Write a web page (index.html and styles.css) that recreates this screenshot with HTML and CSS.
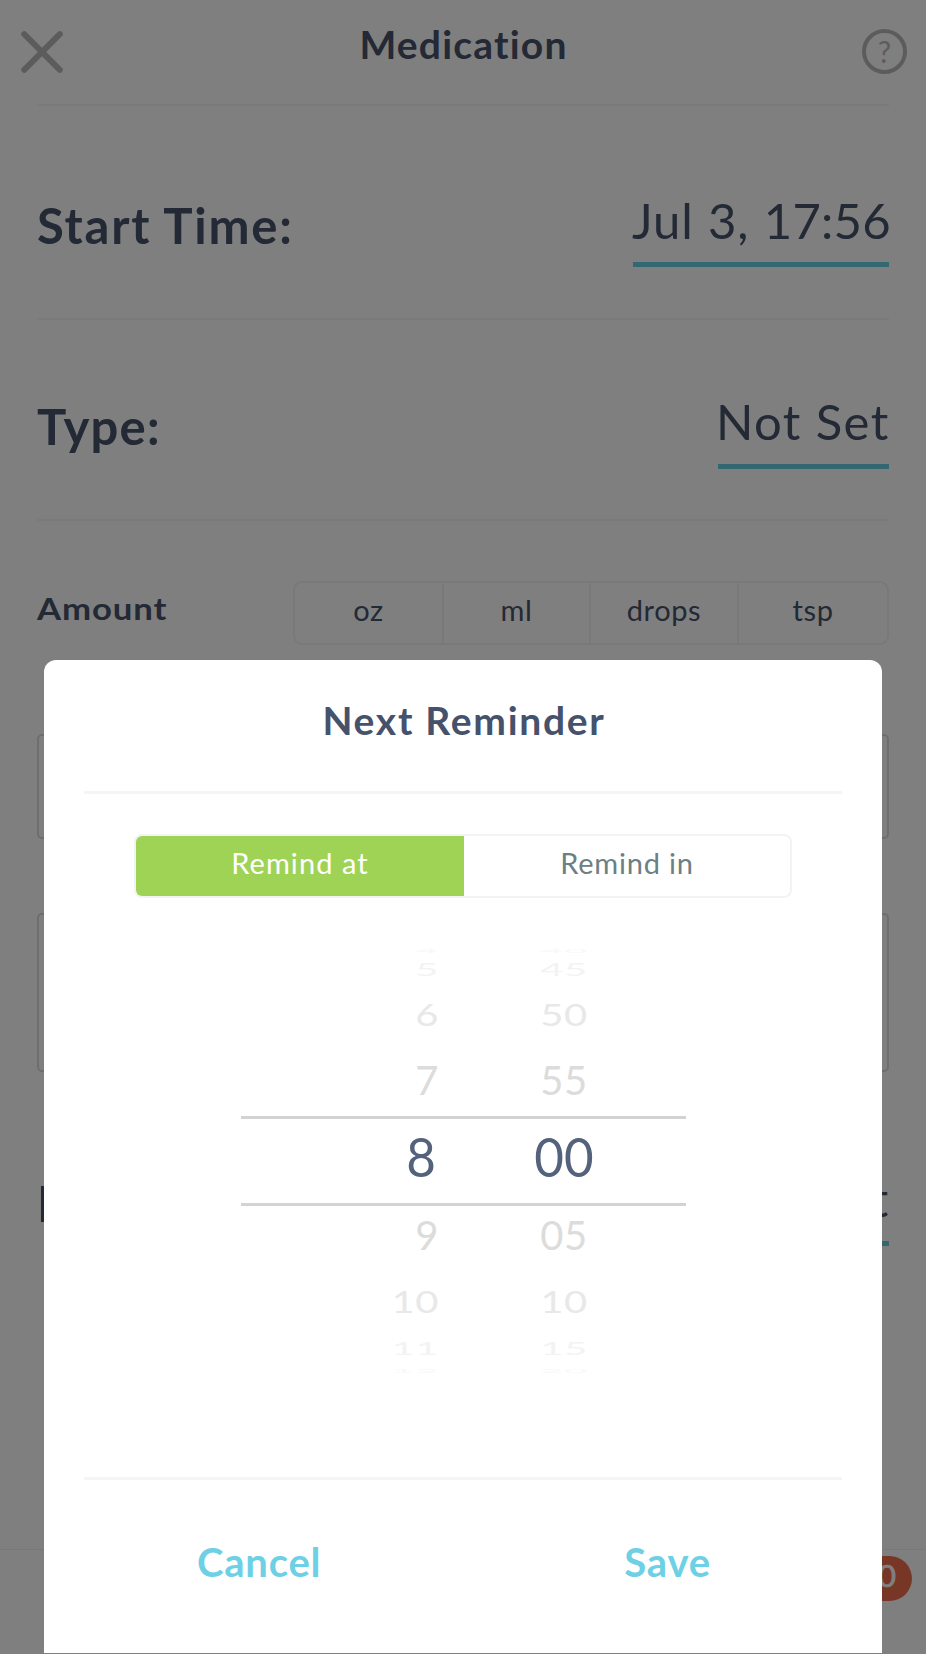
FILE: index.html
```html
<!DOCTYPE html>
<html lang="en">
<head>
<meta charset="utf-8">
<title>Medication</title>
<link rel="stylesheet" href="styles.css">
</head>
<body>
<main class="screen">
  <header class="header">
    <svg class="close" width="42" height="42" viewBox="0 0 42 42"><path d="M3.2 3.2 38.8 38.8M38.8 3.2 3.2 38.8"/></svg>
    <h1 class="title">Medication</h1>
    <div class="help">?</div>
  </header>
  <section class="row row-start">
    <div class="label label-start">Start Time:</div>
    <div class="value value-start">Jul 3, <span class="clock">17:56</span></div>
  </section>
  <section class="row row-type">
    <div class="label label-type">Type:</div>
    <div class="value value-type">Not Set</div>
  </section>
  <section class="amount">
    <div class="amount-label">Amount</div>
    <div class="units">
      <div class="unit">oz</div>
      <div class="unit">ml</div>
      <div class="unit">drops</div>
      <div class="unit">tsp</div>
    </div>
  </section>
  <div class="box box-amount"></div>
  <div class="box box-notes"></div>
  <section class="row row-next">
    <div class="label label-next">Next:</div>
    <div class="value value-type">Not Set</div>
  </section>
  <footer class="tabs"><div class="badge">0</div></footer>
</main>
<div class="overlay">
  <section class="modal">
    <h2 class="modal-title">Next Reminder</h2>
    <div class="switch">
      <div class="option option-on">Remind at</div>
      <div class="option option-off">Remind in</div>
    </div>
    <div class="picker">
      <div class="slot s-edge-top"><span class="hour">4</span><span class="minute">40</span></div>
      <div class="slot s-far-top"><span class="hour">5</span><span class="minute">45</span></div>
      <div class="slot s-mid-top"><span class="hour">6</span><span class="minute">50</span></div>
      <div class="slot s-near-top"><span class="hour">7</span><span class="minute">55</span></div>
      <div class="slot s-current"><span class="hour">8</span><span class="minute">00</span></div>
      <div class="slot s-near"><span class="hour">9</span><span class="minute">05</span></div>
      <div class="slot s-mid"><span class="hour">10</span><span class="minute">10</span></div>
      <div class="slot s-far"><span class="hour">11</span><span class="minute">15</span></div>
      <div class="slot s-edge"><span class="hour">12</span><span class="minute">20</span></div>
    </div>
    <div class="actions">
      <div class="action cancel">Cancel</div>
      <div class="action save">Save</div>
    </div>
  </section>
</div>
</body>
</html>
```
FILE: styles.css
```css
* { box-sizing: border-box; }
body {
  margin: 0;
  width: 926px;
  height: 1654px;
  overflow: hidden;
  background: #fff;
  color: #46526b;
  font-family: Lato, "Liberation Sans", sans-serif;
}
h1, h2 { margin: 0; font-weight: 700; }
.screen { display: flex; flex-direction: column; height: 1654px; }
.header {
  display: flex;
  justify-content: space-between;
  height: 106px;
  margin: 0 37px;
  border-bottom: 2px solid #f4f4f4;
}
.close { flex: none; margin: 31px 0 0 -16px; fill: none; stroke: #b9b9b9; stroke-width: 6; stroke-linecap: round; }
.title { margin-top: 21px; padding-left: 2px; font-size: 39px; line-height: 46px; letter-spacing: 1.2px; }
.help {
  flex: none;
  width: 45px;
  height: 45px;
  margin: 29px -18px 0 0;
  border: 4px solid #b9b9b9;
  border-radius: 50%;
  color: #b9b9b9;
  font-size: 30px;
  line-height: 37px;
  text-align: center;
}
.row { display: flex; justify-content: space-between; align-items: flex-start; margin: 0 37px; }
.row-start { height: 214px; padding-top: 84px; border-bottom: 2px solid #f4f4f4; }
.row-type { height: 201px; padding-top: 71px; border-bottom: 2px solid #f4f4f4; }
.row-next { padding-top: 96px; }
.label { margin-top: 5px; font-size: 49px; line-height: 60px; font-weight: 700; letter-spacing: 1.75px; }
.label-type { letter-spacing: 1.2px; }
.value { font-size: 49px; line-height: 60px; padding-bottom: 12px; border-bottom: 5px solid #66cee2; white-space: nowrap; }
.value-start { width: 256px; text-indent: -1px; letter-spacing: .9px; word-spacing: 1px; }
.clock { letter-spacing: .2px; }
.value-type { width: 171px; padding-bottom: 13px; text-indent: -2px; letter-spacing: 1.4px; }
.amount { display: flex; justify-content: space-between; margin: 0 37px; padding-top: 60px; }
.amount-label { padding-top: 9px; font-size: 31px; line-height: 37px; font-weight: 700; letter-spacing: .8px; transform: scaleX(1.12); transform-origin: left; }
.units {
  display: grid;
  grid-template-columns: 147px 147px 148px 1fr;
  width: 596px;
  height: 64px;
  border: 2px solid #f2f2f2;
  border-radius: 9px;
}
.unit { padding-bottom: 8px; font-size: 29px; line-height: 53px; text-align: center; letter-spacing: .6px; }
.unit + .unit { border-left: 2px solid #f2f2f2; }
.box { margin: 0 37px; border: 2px solid #dcdcdc; border-radius: 5px; }
.box-amount { height: 105px; margin-top: 89px; }
.box-notes { height: 159px; margin-top: 74px; }
.tabs { display: flex; justify-content: flex-end; height: 105px; margin-top: auto; padding: 6px 14px 0 0; border-top: 1px solid #f0f0f0; }
.badge { width: 64px; height: 45px; padding-right: 16px; border-radius: 23px; background: #f06d4e; color: #fff; font-size: 31px; line-height: 38px; text-align: right; -webkit-text-stroke: .7px #fff; }

.overlay { position: fixed; inset: 0; display: flex; padding: 659.5px 44px 1px; background: rgba(0, 0, 0, .5); }
.modal { flex: 1; display: flex; flex-direction: column; border-radius: 12px 12px 0 0; background: #fff; }
.modal-title {
  height: 134px;
  margin: 0 40px;
  padding: 37px 0 0 2px;
  border-bottom: 3px solid #f5f5f5;
  font-size: 39px;
  line-height: 46px;
  text-align: center;
  letter-spacing: 1.7px;
}
.switch { display: flex; height: 64px; margin: 40.5px 90px 0; border: 2px solid #f3f3f3; border-radius: 8px; overflow: hidden; }
.option { font-size: 29px; line-height: 53px; text-align: center; letter-spacing: .8px; }
.option-on { width: 328px; background: #9fd356; color: #fff; letter-spacing: 1.1px; }
.option-off { flex: 1; color: #6b8083; }

.picker { width: 445px; height: 442px; margin: 46px 0 0 197px; }
.slot { display: flex; align-items: center; font-size: 40px; line-height: 48px; color: #dcdcdc; letter-spacing: .6px; }
.hour { width: 198px; text-align: right; }
.minute { width: 94px; margin-left: 78px; text-align: center; }
.s-edge-top { height: 14px; color: #f8f8f8; }
.s-far-top { height: 22px; color: #f3f3f3; }
.s-mid-top { height: 67px; color: #e8e8e8; }
.s-near-top { height: 65px; }
.s-current { height: 90px; margin-top: 4px; padding-bottom: 11px; border: solid #d3d3d3; border-width: 3px 0; color: #55627b; font-size: 55px; letter-spacing: 0; }
.s-near { height: 57px; }
.s-mid { height: 75px; color: #e8e8e8; }
.s-far { height: 19px; color: #f3f3f3; }
.s-edge { height: 28px; color: #f8f8f8; }
.s-mid-top span, .s-mid span { transform: scaleY(.78); }
.s-far-top span, .s-far span { transform: scaleY(.45); }
.s-edge-top span, .s-edge span { transform: scaleY(.14); }
.s-current span { transform: scaleX(.93); }
.s-current .hour { width: 195px; transform-origin: right; }
.s-current .minute { margin-left: 81px; }

.actions { display: flex; margin: auto 40px 0; height: 176px; border-top: 3px solid #f5f5f5; }
.action { padding-top: 58px; color: #6dd0e5; font-size: 40px; line-height: 48px; font-weight: 700; letter-spacing: .8px; }
.cancel { margin-left: 113px; }
.save { margin-left: 303px; }
```
